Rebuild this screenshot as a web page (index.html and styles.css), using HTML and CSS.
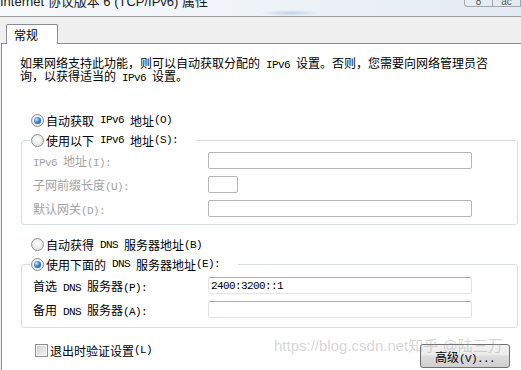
FILE: index.html
```html
<!DOCTYPE html>
<html lang="zh-CN">
<head>
    <meta charset="UTF-8">
    <title>Internet 协议版本 6 (TCP/IPv6) 属性</title>
    <link rel="stylesheet" href="styles.css">
</head>
<body>
    <div class="window">
        <div class="titlebar">
            <span class="title">Internet 协议版本 6 (TCP/IPv6) 属性</span>
            <div class="ghost"><span>8</span><span>ac</span></div>
        </div>

        <div class="tabs">
            <div class="tab">常规</div>
        </div>

        <div class="panel">
            <p class="intro">如果网络支持此功能，则可以自动获取分配的<span class="en"> IPv6 </span>设置。否则，您需要向网络管理员咨<br>询，以获得适当的<span class="en"> IPv6 </span>设置。</p>

            <div class="option first"><span class="radio checked"></span>自动获取<span class="en"> IPv6 </span>地址<span class="en">(O)</span></div>

            <fieldset class="group disabled">
                <legend><div class="option"><span class="radio"></span>使用以下<span class="en"> IPv6 </span>地址<span class="en">(S):</span></div></legend>
                <div class="fields">
                    <label><span class="en">IPv6 </span>地址<span class="en">(I):</span></label>
                    <input type="text" disabled>
                    <label>子网前缀长度<span class="en">(U):</span></label>
                    <input type="text" class="short" disabled>
                    <label>默认网关<span class="en">(D):</span></label>
                    <input type="text" disabled>
                </div>
            </fieldset>

            <div class="option spaced"><span class="radio"></span>自动获得<span class="en"> DNS </span>服务器地址<span class="en">(B)</span></div>

            <fieldset class="group dns">
                <legend><div class="option"><span class="radio checked"></span>使用下面的<span class="en"> DNS </span>服务器地址<span class="en">(E):</span></div></legend>
                <div class="fields">
                    <label>首选<span class="en"> DNS </span>服务器<span class="en">(P):</span></label>
                    <input type="text" value="2400:3200::1">
                    <label>备用<span class="en"> DNS </span>服务器<span class="en">(A):</span></label>
                    <input type="text">
                </div>
            </fieldset>

            <div class="footer">
                <label class="check"><span class="box"></span>退出时验证设置<span class="en">(L)</span></label>
                <button class="btn">高级<span class="en">(V)...</span></button>
            </div>

            <div class="watermark">https://blog.csdn.net知乎 @陆三万</div>
        </div>
    </div>
</body>
</html>
```

FILE: styles.css
```css
body {
    margin: 0;
    font-family: "Noto Sans CJK SC", sans-serif;
    font-size: 12px;
    background-color: #f0f0f0;
    color: #000;
    overflow: hidden;
}
.window {
    width: 521px;
    height: 370px;
    display: flex;
    flex-direction: column;
    overflow: hidden;
}
.en {
    font-family: "Liberation Mono", monospace;
    font-size: 11px;
    line-height: 0;
    letter-spacing: -0.6px;
    white-space: pre;
}
.titlebar {
    flex-shrink: 0;
    height: 16px;
    border-bottom: 1px solid #9c9c9c;
    display: flex;
    align-items: flex-start;
    overflow: hidden;
    background:
        radial-gradient(ellipse 30px 3px at 290px 13px, rgba(110, 150, 205, 0.35), transparent),
        linear-gradient(to right, #f8f9fb 0%, #eef3f8 50%, #e3ebf2 100%);
}
.title {
    font-family: "Liberation Sans", "Noto Sans CJK SC", sans-serif;
    font-size: 13px;
    line-height: 16px;
    margin-top: -6px;
    color: #1a1a1a;
    white-space: nowrap;
}
.ghost {
    margin-left: auto;
    display: flex;
}
.ghost span {
    width: 27px;
    height: 6px;
    border: 1px solid #a6a6a6;
    border-top: none;
    font-family: "Liberation Sans", sans-serif;
    font-size: 10px;
    line-height: 4px;
    text-align: center;
    color: #555;
    overflow: hidden;
}
.ghost span:first-child {
    border-radius: 0 0 0 4px;
}
.ghost span + span {
    border-left: none;
}
.tabs {
    flex-shrink: 0;
    height: 26px;
    display: flex;
    align-items: flex-end;
    padding-left: 6px;
}
.tab {
    position: relative;
    z-index: 1;
    width: 43px;
    height: 19px;
    padding-left: 7px;
    margin-bottom: -1px;
    border: 1px solid #898c95;
    border-bottom: none;
    border-radius: 2px 2px 0 0;
    background: #fff;
    line-height: 19px;
}
.panel {
    position: relative;
    flex: 1;
    min-height: 0;
    margin-left: 1px;
    border-left: 1px solid #898c95;
    border-top: 1px solid #898c95;
    background: #fff;
}
.intro {
    margin: 12px 0 0 18px;
    line-height: 13px;
}
.option {
    display: flex;
    align-items: center;
    height: 20px;
    margin-left: 29px;
    white-space: nowrap;
}
.option.first {
    margin-top: 28px;
}
.option.spaced {
    margin-top: 10px;
    height: 19px;
}
legend .option {
    margin-left: 0;
}
.radio {
    width: 13px;
    height: 13px;
    box-sizing: border-box;
    border-radius: 50%;
    border: 1px solid #8f8f8f;
    background: radial-gradient(circle at 50% 45%, #fdfdfd 0, #ececec 55%, #cdcdcd 100%);
    margin-right: 2px;
    display: flex;
    align-items: center;
    justify-content: center;
}
.radio.checked::after {
    content: "";
    width: 7px;
    height: 7px;
    border-radius: 50%;
    background: radial-gradient(circle at 35% 35%, #c4e5ff 0, #3d88cf 45%, #0e4379 100%);
}
.group {
    margin: 0 0 0 19px;
    width: 497px;
    min-width: 0;
    box-sizing: border-box;
    border: 1px solid #d5dfe5;
    border-radius: 3px;
    padding: 2px 0 7px 11px;
}
.group.dns {
    padding: 3px 0 9px 11px;
}
.group legend {
    margin-left: -3px;
    padding: 0 18px 0 1px;
}
.fields {
    display: grid;
    grid-template-columns: 175px auto;
    grid-auto-rows: 17px;
    row-gap: 7px;
    align-items: center;
}
.fields label {
    line-height: 17px;
    white-space: nowrap;
}
.fields input {
    justify-self: start;
    width: 264px;
    height: 17px;
    box-sizing: border-box;
    margin: 0;
    padding: 0 2px;
    border: 1px solid #e2e3ea;
    border-top-color: #abadb3;
    border-radius: 2px;
    background: #fff;
    font-family: "Liberation Mono", monospace;
    font-size: 11px;
    letter-spacing: -0.6px;
    color: #000;
    outline: none;
}
.fields input.short {
    width: 30px;
}
.disabled label {
    color: #a3a3a3;
}
.disabled input {
    border-color: #b4b6b9;
}
.footer {
    display: flex;
    justify-content: space-between;
    align-items: flex-start;
    margin-top: 12px;
    padding: 0 11px 0 33px;
}
.check {
    display: flex;
    align-items: center;
    height: 20px;
}
.box {
    width: 13px;
    height: 13px;
    box-sizing: border-box;
    border: 1px solid #8e8f8f;
    background: linear-gradient(135deg, #d0d0d0, #f4f4f4);
    box-shadow: inset 0 0 0 1px #f6f6f6;
    margin-right: 2px;
}
.btn {
    margin-top: 4px;
    width: 90px;
    height: 24px;
    padding: 0;
    border: 1px solid #707070;
    border-radius: 3px;
    background: linear-gradient(#f2f2f2, #ebebeb 45%, #dddddd 50%, #cfcfcf);
    font-family: inherit;
    font-size: 12px;
    color: #000;
}
.watermark {
    position: absolute;
    left: 272px;
    top: 294px;
    z-index: 2;
    font-family: "Liberation Sans", "Noto Sans CJK SC", sans-serif;
    font-size: 15px;
    line-height: 15px;
    color: rgba(150, 150, 150, 0.4);
    white-space: nowrap;
    pointer-events: none;
}
```
